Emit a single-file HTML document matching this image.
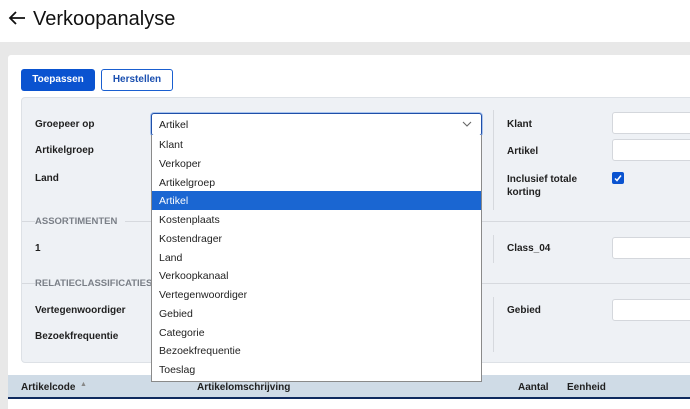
<!DOCTYPE html>
<html><head><meta charset="utf-8"><style>
*{margin:0;padding:0;box-sizing:border-box}
body{width:690px;height:409px;overflow:hidden;background:#e8e8e8;font-family:"Liberation Sans",Arial,sans-serif;position:relative;color:#1a1a1a}
.a{position:absolute}
.lbl{position:absolute;font-size:10px;font-weight:bold;color:#1f1f1f}
.sec{position:absolute;font-size:9.5px;font-weight:bold;color:#7a7f87;background:#eef1f5;padding-right:8px}
.inp{position:absolute;background:#fff;border:1px solid #d4d7dc;border-radius:3px;height:22px}
.item{height:18.75px;line-height:20px;padding-left:7px;font-size:10.5px;color:#222}
</style></head><body>
<div class="a" style="left:0;top:0;width:690px;height:42px;background:#fff"></div>
<svg class="a" style="left:7px;top:10px" width="20" height="16" viewBox="0 0 20 16"><path d="M18 8H3M9 2L3 8l6 6" fill="none" stroke="#111" stroke-width="1.8"/></svg>
<div class="a" style="left:33px;top:8px;font-size:20px;color:#111">Verkoopanalyse</div>
<div class="a" style="left:8px;top:55px;width:682px;height:354px;background:#fff;border-radius:3px 0 0 0"></div>
<div class="a" style="left:21px;top:69px;width:74px;height:22px;background:#0a53d0;border-radius:3px;color:#fff;font-size:10px;font-weight:bold;text-align:center;line-height:22px">Toepassen</div>
<div class="a" style="left:101px;top:69px;width:72px;height:22px;background:#fff;border:1px solid #1a5fd0;border-radius:3px;color:#1a4fb0;font-size:10px;font-weight:bold;text-align:center;line-height:20px">Herstellen</div>
<div class="a" style="left:21px;top:97px;width:680px;height:266px;background:#eef1f5;border:1px solid #dde1e6;border-radius:4px"></div>
<div class="a" style="left:22px;top:221px;width:668px;height:1px;background:#d6d9de"></div>
<div class="a" style="left:22px;top:283px;width:668px;height:1px;background:#d6d9de"></div>
<div class="a" style="left:493px;top:110px;width:1px;height:100px;background:#d6d9de"></div>
<div class="a" style="left:493px;top:235px;width:1px;height:28px;background:#d6d9de"></div>
<div class="a" style="left:493px;top:297px;width:1px;height:55px;background:#d6d9de"></div>
<div class="lbl" style="left:35px;top:119px">Groepeer op</div>
<div class="lbl" style="left:35px;top:145px">Artikelgroep</div>
<div class="lbl" style="left:35px;top:173px">Land</div>
<div class="sec" style="left:35px;top:216px">ASSORTIMENTEN</div>
<div class="lbl" style="left:35px;top:243px">1</div>
<div class="sec" style="left:35px;top:278px">RELATIECLASSIFICATIES</div>
<div class="lbl" style="left:35px;top:305px">Vertegenwoordiger</div>
<div class="lbl" style="left:35px;top:331px">Bezoekfrequentie</div>
<div class="lbl" style="left:507px;top:119px">Klant</div>
<div class="lbl" style="left:507px;top:146px">Artikel</div>
<div class="lbl" style="left:507px;top:173px;line-height:13px">Inclusief totale<br>korting</div>
<div class="lbl" style="left:507px;top:243px">Class_04</div>
<div class="lbl" style="left:507px;top:305px">Gebied</div>
<div class="inp" style="left:612px;top:112px;width:90px"></div>
<div class="inp" style="left:612px;top:139px;width:90px"></div>
<div class="inp" style="left:612px;top:237px;width:90px"></div>
<div class="inp" style="left:612px;top:299px;width:90px"></div>
<div class="a" style="left:612px;top:172px;width:12px;height:12px;background:#0a53d0;border-radius:2px"></div>
<svg class="a" style="left:612px;top:172px" width="12" height="12"><path d="M3 6.5l2 2 4-5" fill="none" stroke="#fff" stroke-width="1.5"/></svg>
<div class="a" style="left:151px;top:113px;width:331px;height:23px;background:#fff;border:1px solid #1f4fa8;border-radius:3px;box-shadow:0 0 0 1px #a9c4ee;font-size:10.5px;line-height:22px;padding-left:7px">Artikel</div>
<svg class="a" style="left:462px;top:120px" width="10" height="8"><path d="M1 2l4 4 4-4" fill="none" stroke="#666" stroke-width="1.1"/></svg>
<div class="a" style="left:8px;top:375px;width:682px;height:24px;background:#cfdbe6;border-bottom:2px solid #0f2a5e"></div>
<div class="lbl" style="left:21px;top:382px">Artikelcode</div>
<div class="a" style="left:80px;top:381px;font-size:7px;color:#888">▲</div>
<div class="lbl" style="left:197px;top:382px">Artikelomschrijving</div>
<div class="lbl" style="left:518px;top:382px">Aantal</div>
<div class="lbl" style="left:567px;top:382px">Eenheid</div>
<div class="a" style="left:151px;top:135px;width:331px;height:247px;background:#fff;border:1px solid #8a8a8a;border-top:none">
<div class="item">Klant</div><div class="item">Verkoper</div><div class="item">Artikelgroep</div>
<div class="item" style="background:#1a66d2;color:#fff">Artikel</div>
<div class="item">Kostenplaats</div><div class="item">Kostendrager</div><div class="item">Land</div><div class="item">Verkoopkanaal</div><div class="item">Vertegenwoordiger</div><div class="item">Gebied</div><div class="item">Categorie</div><div class="item">Bezoekfrequentie</div><div class="item">Toeslag</div>
</div>
</body></html>
